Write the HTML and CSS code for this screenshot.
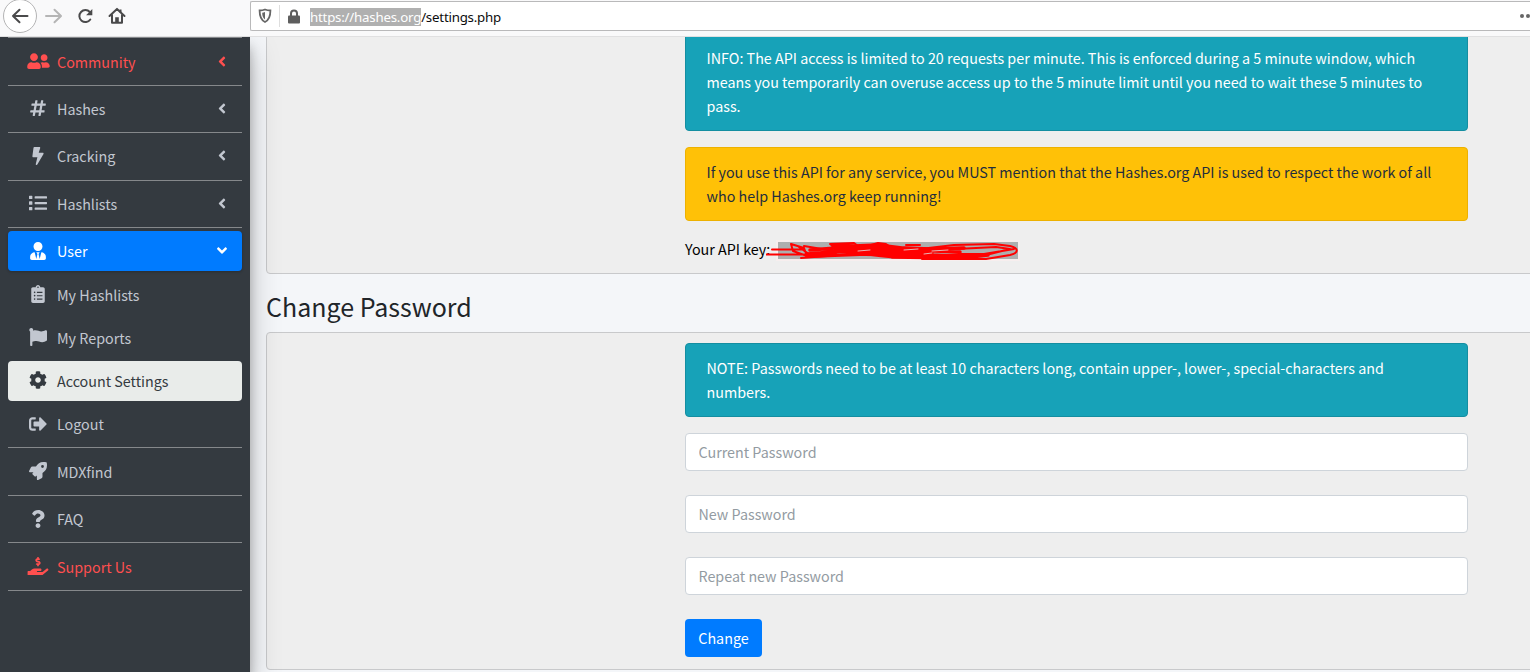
FILE: index.html
```html
<!DOCTYPE html>
<html lang="en">
<head>
<meta charset="utf-8">
<title>Account Settings</title>
<link rel="stylesheet" href="styles.css">
</head>
<body>
<svg class="defs" width="0" height="0"><symbol id="angle" viewBox="0 0 256 512"><path d="M31.700 239l136-136c9.400-9.400 24.600-9.400 33.900 0l22.600 22.600c9.400 9.400 9.400 24.600 0 33.900L127.900 256l96.400 96.400c9.400 9.400 9.400 24.600 0 33.900L201.700 409c-9.400 9.400-24.600 9.400-33.900 0l-136-136c-9.500-9.400-9.500-24.600-.1-34z"/></symbol></svg>
<header class="toolbar">
  <div class="nav-buttons">
    <span class="back"><svg width="18" height="16" viewBox="0 0 18 16"><path d="M16.500 8H2M8.500 1.800L2 8l6.500 6.200"/></svg></span>
    <svg class="forward" width="18" height="16" viewBox="0 0 18 16"><path d="M1 8h14.500M9.500 1.800L16 8l-6.500 6.200"/></svg>
    <svg class="reload" width="18" height="18" viewBox="0 0 18 18"><path d="M14.300 12.500A6 6 0 1 1 13.800 5"/><path class="solid" d="M16.300 2v6.200h-6.200z"/></svg>
    <svg class="home" width="18" height="18" viewBox="0 0 18 18"><path d="M1.500 9L9 1.900 16.500 9M4 8v7.800h10V8"/><path class="solid" d="M7.200 10.200h3.600V16H7.200zM11.500 2.500h2v3h-2z"/></svg>
  </div>
  <div class="address">
    <svg class="shield" width="14" height="16" viewBox="0 0 14 16"><path d="M7 1.500c2 .8 3.500 1 5.400 1 0 5-.5 9.200-5.400 11.500C2.100 11.700 1.600 7.500 1.600 2.500c1.900 0 3.400-.2 5.400-1z"/><path class="solid" d="M7 4v7.500C5 10 4.200 8 4.200 4.700 5.200 4.600 6 4.400 7 4z"/></svg>
    <span class="divider"></span>
    <svg class="lock" width="12" height="15" viewBox="0 0 12 15"><path d="M3 7V4.500a3 3 0 0 1 6 0V7"/><rect x="0" y="6.500" width="12" height="8" rx="1"/></svg>
    <span class="url"><mark>https://hashes.org</mark>/settings.php</span>
    <span class="dots"><i></i><i></i></span>
  </div>
</header>
<div class="page">
  <nav class="sidebar">
    <hr>
    <a class="item red"><svg class="icon wide" viewBox="0 0 640 512"><path d="M192 256c61.900 0 112-50.100 112-112S253.900 32 192 32 80 82.100 80 144s50.100 112 112 112zm76.800 32h-8.300c-20.800 10-43.900 16-68.500 16s-47.600-6-68.500-16h-8.300C51.600 288 0 339.600 0 403.200V432c0 26.500 21.500 48 48 48h288c26.500 0 48-21.500 48-48v-28.800c0-63.600-51.600-115.200-115.200-115.200zM480 256c53 0 96-43 96-96s-43-96-96-96-96 43-96 96 43 96 96 96zm48 32h-3.800c-13.900 4.800-28.600 8-44.200 8s-30.300-3.200-44.200-8H432c-20.400 0-39.200 5.900-55.700 15.400 24.400 26.300 39.700 61.200 39.700 99.800v38.400c0 2.200-.5 4.300-.6 6.400H592c26.500 0 48-21.500 48-48 0-61.900-50.100-112-112-112z"/></svg><span>Community</span><svg class="angle"><use href="#angle"/></svg></a>
    <hr>
    <a class="item"><svg class="icon" viewBox="0 0 448 512"><path d="M440.667 182.109l7.143-40c1.313-7.355-4.342-14.109-11.813-14.109h-74.810l14.623-81.891C377.123 38.754 371.468 32 363.997 32h-40.632a12 12 0 0 0-11.813 9.891L296.175 128H197.540l14.623-81.891C213.477 38.754 207.822 32 200.350 32h-40.632a12 12 0 0 0-11.813 9.891L132.528 128H53.432a12 12 0 0 0-11.813 9.891l-7.143 40C33.163 185.246 38.818 192 46.289 192h74.810L98.242 320H19.146a12 12 0 0 0-11.813 9.891l-7.143 40C-1.123 377.246 4.532 384 12.003 384h74.810L72.190 465.891C70.877 473.246 76.532 480 84.003 480h40.632a12 12 0 0 0 11.813-9.891L151.826 384h98.634l-14.623 81.891C234.523 473.246 240.178 480 247.650 480h40.632a12 12 0 0 0 11.813-9.891L315.472 384h79.096a12 12 0 0 0 11.813-9.891l7.143-40c1.313-7.355-4.342-14.109-11.813-14.109h-74.810l22.857-128h79.096a12 12 0 0 0 11.813-9.891zM261.889 320h-98.634l22.857-128h98.634l-22.857 128z"/></svg><span>Hashes</span><svg class="angle"><use href="#angle"/></svg></a>
    <hr>
    <a class="item"><svg class="icon" viewBox="0 0 320 512"><path d="M296 160H180.600l42.600-129.800C227.200 15 215.700 0 200 0H56C44 0 33.800 8.900 32.200 20.800l-32 240C-1.700 275.200 9.500 288 24 288h118.700L96.600 482.500c-3.600 15.200 8 29.500 23.300 29.500 8.400 0 16.400-4.400 20.800-12l176-304c9.300-15.900-2.200-36-20.700-36z"/></svg><span>Cracking</span><svg class="angle"><use href="#angle"/></svg></a>
    <hr>
    <a class="item"><svg class="icon" viewBox="0 0 512 512"><path d="M80 368H16a16 16 0 0 0-16 16v64a16 16 0 0 0 16 16h64a16 16 0 0 0 16-16v-64a16 16 0 0 0-16-16zm0-320H16A16 16 0 0 0 0 64v64a16 16 0 0 0 16 16h64a16 16 0 0 0 16-16V64a16 16 0 0 0-16-16zm0 160H16a16 16 0 0 0-16 16v64a16 16 0 0 0 16 16h64a16 16 0 0 0 16-16v-64a16 16 0 0 0-16-16zm416 176H176a16 16 0 0 0-16 16v32a16 16 0 0 0 16 16h320a16 16 0 0 0 16-16v-32a16 16 0 0 0-16-16zm0-320H176a16 16 0 0 0-16 16v32a16 16 0 0 0 16 16h320a16 16 0 0 0 16-16V80a16 16 0 0 0-16-16zm0 160H176a16 16 0 0 0-16 16v32a16 16 0 0 0 16 16h320a16 16 0 0 0 16-16v-32a16 16 0 0 0-16-16z"/></svg><span>Hashlists</span><svg class="angle"><use href="#angle"/></svg></a>
    <hr>
    <a class="item open"><svg class="icon" viewBox="0 0 448 512"><path d="M224 256c70.700 0 128-57.300 128-128S294.700 0 224 0 96 57.300 96 128s57.300 128 128 128zm95.800 32.600L272 480l-32-136 32-56h-96l32 56-32 136-47.800-191.400C56.900 292 0 350.300 0 422.400V464c0 26.500 21.500 48 48 48h352c26.500 0 48-21.500 48-48v-41.600c0-72.100-56.900-130.400-128.200-133.800z"/></svg><span>User</span><svg class="angle"><use href="#angle"/></svg></a>
    <a class="item"><svg class="icon" viewBox="0 0 384 512"><path d="M336 64h-80c0-35.300-28.700-64-64-64s-64 28.700-64 64H48C21.500 64 0 85.500 0 112v352c0 26.500 21.500 48 48 48h288c26.500 0 48-21.500 48-48V112c0-26.500-21.500-48-48-48zM96 424c-13.300 0-24-10.700-24-24s10.700-24 24-24 24 10.700 24 24-10.700 24-24 24zm0-96c-13.300 0-24-10.700-24-24s10.700-24 24-24 24 10.700 24 24-10.700 24-24 24zm0-96c-13.300 0-24-10.700-24-24s10.700-24 24-24 24 10.700 24 24-10.700 24-24 24zm96-192c13.300 0 24 10.700 24 24s-10.700 24-24 24-24-10.700-24-24 10.700-24 24-24zm128 368c0 4.400-3.600 8-8 8H168c-4.400 0-8-3.600-8-8v-16c0-4.400 3.600-8 8-8h144c4.400 0 8 3.600 8 8zm0-96c0 4.400-3.600 8-8 8H168c-4.400 0-8-3.600-8-8v-16c0-4.400 3.600-8 8-8h144c4.400 0 8 3.600 8 8zm0-96c0 4.400-3.600 8-8 8H168c-4.400 0-8-3.600-8-8v-16c0-4.400 3.600-8 8-8h144c4.400 0 8 3.600 8 8z"/></svg><span>My Hashlists</span></a>
    <a class="item"><svg class="icon" viewBox="0 0 512 512"><path d="M349.565 98.783C295.978 98.783 251.721 64 184.348 64c-24.955 0-47.309 4.384-68.045 12.013a55.947 55.947 0 0 0 3.586-23.562C118.117 24.015 94.806 1.206 66.338.048 34.345-1.254 8 24.296 8 56c0 19.026 9.497 35.825 24 45.945V488c0 13.255 10.745 24 24 24h16c13.255 0 24-10.745 24-24v-94.400c28.311-12.064 63.582-22.122 114.435-22.122 53.588 0 97.844 34.783 165.217 34.783 48.169 0 86.667-16.294 122.505-40.858C506.840 359.452 512 349.571 512 339.045v-243.100c0-23.393-24.269-38.870-45.485-29.016-34.338 15.948-76.454 31.854-116.950 31.854z"/></svg><span>My Reports</span></a>
    <a class="item active"><svg class="icon" viewBox="0 0 512 512"><path d="M487.400 315.700l-42.600-24.600c4.300-23.200 4.300-47 0-70.200l42.600-24.600c4.900-2.800 7.100-8.600 5.500-14-11.100-35.600-30-67.800-54.700-94.600-3.800-4.100-10-5.100-14.800-2.300L380.800 110c-17.900-15.400-38.500-27.300-60.800-35.100V25.800c0-5.600-3.900-10.500-9.400-11.700-36.700-8.200-74.300-7.800-109.200 0-5.500 1.200-9.400 6.100-9.400 11.700V75c-22.200 7.900-42.800 19.800-60.800 35.100L88.700 85.500c-4.900-2.800-11-1.900-14.800 2.300-24.700 26.700-43.600 58.900-54.700 94.600-1.700 5.400.6 11.200 5.500 14L67.300 221c-4.300 23.200-4.300 47 0 70.200l-42.600 24.600c-4.900 2.800-7.100 8.600-5.500 14 11.100 35.600 30 67.800 54.700 94.600 3.800 4.100 10 5.100 14.800 2.300l42.600-24.600c17.900 15.400 38.500 27.300 60.800 35.100v49.200c0 5.600 3.900 10.500 9.400 11.700 36.700 8.200 74.300 7.800 109.200 0 5.500-1.200 9.400-6.100 9.400-11.700v-49.200c22.200-7.900 42.800-19.800 60.800-35.100l42.600 24.600c4.900 2.800 11 1.900 14.800-2.300 24.700-26.700 43.600-58.900 54.700-94.600 1.500-5.500-.7-11.300-5.600-14.100zM256 336c-44.100 0-80-35.900-80-80s35.900-80 80-80 80 35.900 80 80-35.900 80-80 80z"/></svg><span>Account Settings</span></a>
    <a class="item"><svg class="icon" viewBox="0 0 512 512"><path d="M497 273L329 441c-15 15-41 4.500-41-17v-96H152c-13.300 0-24-10.700-24-24v-96c0-13.300 10.700-24 24-24h136V88c0-21.400 25.900-32 41-17l168 168c9.300 9.400 9.300 24.600 0 34zM192 436v-40c0-6.600-5.400-12-12-12H96c-17.700 0-32-14.300-32-32V160c0-17.700 14.300-32 32-32h84c6.600 0 12-5.400 12-12V76c0-6.600-5.400-12-12-12H96c-53 0-96 43-96 96v192c0 53 43 96 96 96h84c6.600 0 12-5.400 12-12z"/></svg><span>Logout</span></a>
    <hr>
    <a class="item"><svg class="icon" viewBox="0 0 512 512"><path d="M505.120 19.094c-1.189-5.531-6.658-11-12.207-12.188C460.716 0 435.507 0 410.407 0 307.175 0 245.270 55.203 199.052 128H94.838c-16.348.016-35.557 11.875-42.887 26.484L2.516 253.297A28.400 28.400 0 0 0 0 264a24.008 24.008 0 0 0 24.006 24h103.840l-22.475 22.469c-11.365 11.361-12.996 32.258 0 45.250l50.904 50.906c11.156 11.188 32.220 13.156 45.277 0L224 384.156V488a24.008 24.008 0 0 0 24 24 28.600 28.600 0 0 0 10.707-2.516l98.728-49.390c14.629-7.297 26.508-26.500 26.508-42.860V312.797c72.590-46.313 128.030-108.406 128.030-211.094.078-25.203.078-50.406-6.853-82.609zM384.040 168a40 40 0 1 1 40-40 40.023 40.023 0 0 1-40 40z"/></svg><span>MDXfind</span></a>
    <hr>
    <a class="item"><svg class="icon" viewBox="0 0 384 512"><path d="M202.021 0C122.202 0 70.503 32.703 29.914 91.026c-7.363 10.580-5.093 25.086 5.178 32.874l43.138 32.709c10.373 7.865 25.132 6.026 33.253-4.148 25.049-31.381 43.630-49.449 82.757-49.449 30.764 0 68.816 19.799 68.816 49.631 0 22.552-18.617 34.134-48.993 51.164-35.423 19.860-82.299 44.576-82.299 106.405V320c0 13.255 10.745 24 24 24h72.471c13.255 0 24-10.745 24-24v-5.773c0-42.860 125.268-44.645 125.268-160.627C377.504 66.256 286.902 0 202.021 0zM192 373.459c-38.196 0-69.271 31.075-69.271 69.271 0 38.195 31.075 69.270 69.271 69.270s69.271-31.075 69.271-69.271-31.075-69.270-69.271-69.270z"/></svg><span>FAQ</span></a>
    <hr>
    <a class="item red"><svg class="icon hand" viewBox="0 0 576 512"><path d="M257.600 144.300l50 14.300c3.600 1 6.100 4.400 6.100 8.100 0 4.600-3.800 8.400-8.400 8.400h-32.800c-3.600 0-7.100-.8-10.300-2.200-4.800-2.200-10.400-1.700-14.100 2l-17.500 17.500c-5.300 5.300-4.700 14.300 1.500 18.400 9.500 6.300 20.300 10.100 31.800 11.500V240c0 8.800 7.200 16 16 16h16c8.800 0 16-7.200 16-16v-17.600c30.300-3.600 53.300-31 49.300-63-2.900-23-20.700-41.300-42.900-47.700l-50-14.300c-3.600-1-6.100-4.400-6.100-8.100 0-4.600 3.800-8.400 8.400-8.400h32.800c3.600 0 7.100.8 10.300 2.200 4.800 2.200 10.400 1.700 14.100-2l17.500-17.500c5.300-5.300 4.700-14.300-1.500-18.400-9.500-6.300-20.300-10.100-31.800-11.500V16c0-8.800-7.200-16-16-16h-16c-8.800 0-16 7.200-16 16v17.600c-30.300 3.600-53.300 31-49.300 63 2.900 23 20.600 41.300 42.900 47.700z"/><path d="M565.300 328.100c-11.800-10.700-30.200-10-42.600 0L430.300 402c-11.300 9.100-25.400 14-40 14H272c-8.800 0-16-7.200-16-16s7.200-16 16-16h78.300c15.900 0 30.700-10.900 33.300-26.600 3.300-20-12.100-37.400-31.600-37.400H192c-27 0-53.100 9.300-74.100 26.300L71.400 384H16c-8.800 0-16 7.200-16 16v96c0 8.800 7.200 16 16 16h356.800c14.500 0 28.600-4.900 40-14L564 377c15.200-12.100 16.400-35.300 1.300-48.900z"/></svg><span>Support Us</span></a>
    <hr>
  </nav>
  <main class="content">
    <section class="card api">
      <div class="alert info">INFO: The API access is limited to 20 requests per minute. This is enforced during a 5 minute window, which<br>means you temporarily can overuse access up to the 5 minute limit until you need to wait these 5 minutes to<br>pass.</div>
      <div class="alert warning">If you use this API for any service, you MUST mention that the Hashes.org API is used to respect the work of all<br>who help Hashes.org keep running!</div>
      <div class="key">Your API key: <span class="secret"><svg class="scribble" width="256" height="22" viewBox="0 0 256 22"><path d="M6 8.500h32M0 13.500h40M25 3l2 7 14 5-3-8-13-4M33 6l14 10-12 1 26-2M38 5l30 5-28 5 30-2"/><path class="thick" d="M44 9l26-2 44-1 50 2 34-1M42 13l34-3 60 1 30 2M50 15l50-2 30 3 36-1 48-1M66 4l22 1 24-1 24 3M116 9l30 4 60 3M126 16l70 1 26-3M84 9l60 0 50 2M84 13l60 1"/><path d="M64 3l24-1 4 3M98 6l14-4 8 1 6 4M140 4l14 0M154 8l34-4 40-1 16 2c9 2 9 7 0 9l-24 4-64 0M190 8l40-2 14 2-20 5-30 0M206 15l42-7"/><path class="gap" d="M92 10l12-1M138 9l14-1M166 10l16-1M158 13l8-1"/></svg></span></div>
    </section>
    <h2>Change Password</h2>
    <section class="card">
      <div class="alert info">NOTE: Passwords need to be at least 10 characters long, contain upper-, lower-, special-characters and<br>numbers.</div>
      <input type="password" placeholder="Current Password">
      <input type="password" placeholder="New Password">
      <input type="password" placeholder="Repeat new Password">
      <button>Change</button>
    </section>
  </main>
</div>
</body>
</html>
```
FILE: styles.css
```css
* { box-sizing: border-box; }
body {
  margin: 0;
  width: 1530px;
  height: 672px;
  overflow: hidden;
  display: flex;
  flex-direction: column;
  background: #f4f6f9;
  color: #212529;
  font: 14.32px/24px "Noto Sans CJK SC", "Noto Sans", sans-serif;
}
svg { display: block; flex: none; }

/* Browser toolbar */
.toolbar {
  display: flex;
  flex: none;
  height: 37px;
  background: #f9f9fa;
  border-bottom: 1px solid #e0e0e1;
  position: relative;
  z-index: 2;
}
.nav-buttons { width: 250px; height: 32px; display: flex; align-items: center; }
.nav-buttons svg { fill: none; stroke: #4a4a4b; stroke-width: 2; stroke-linecap: round; stroke-linejoin: round; }
.nav-buttons .solid { fill: #4a4a4b; stroke: none; }
.back {
  width: 34px; height: 34px; margin-left: 3px;
  border: 1px solid #b4b4b5; border-radius: 50%; background: #fff;
  display: flex; align-items: center; justify-content: center;
}
.nav-buttons .forward { margin-left: 8px; stroke: #b5b5b5; }
.reload { margin-left: 13px; }
.home { margin-left: 14px; }
.address {
  flex: 1; height: 30px; margin-top: 1px;
  display: flex; align-items: center;
  background: #fff; border: 1px solid #b9b9ba; border-right: 0; border-radius: 2px 0 0 2px;
  padding-left: 7px;
}
.shield { fill: none; stroke: #666; stroke-width: 1.8; }
.shield .solid { fill: #666; stroke: none; }
.divider { width: 1px; height: 22px; background: #dedede; margin: 0 8px 0 7px; }
.lock { fill: #5e5e5e; }
.lock path { fill: none; stroke: #5e5e5e; stroke-width: 2; }
.url { margin: 2px 0 0 10px; font: 13.3px/18px "Noto Sans", sans-serif; color: #0c0c0d; white-space: nowrap; letter-spacing: -.22px; }
.url mark { background: #b0b0b0; color: #fff; display: inline-block; }
.dots { margin-left: auto; display: flex; gap: 2px; }
.dots i { width: 4px; height: 4px; border-radius: 50%; background: #666; }

/* Page body */
.page { display: flex; flex: 1; min-height: 0; }
.sidebar {
  flex: none; width: 250px; padding: .4px 8px 0;
  background: #343a40; color: #c2c7d0;
  position: relative; z-index: 1;
  box-shadow: 0 14px 28px rgba(0,0,0,.25), 0 10px 10px rgba(0,0,0,.22);
}
.sidebar hr { height: 1px; border: 0; margin: 0 0 3.22px; background: #85888b; }
.item {
  display: flex; align-items: center;
  height: 40px; margin-bottom: 3.22px; padding: 0 16px;
  border-radius: 4px;
}
.item span { flex: 1; }
.icon { width: 28px; height: 18px; margin-right: 5px; fill: currentColor; position: relative; top: -.6px; }
.wide { width: 23px; margin: 0 7px 0 3px; }
.hand { height: 18.500px; }
.angle { width: 8px; height: 17px; fill: currentColor; position: relative; top: -.6px; }
.red { color: #ff4f4f; }
.open { background: #007bff; color: #fff; box-shadow: 0 1px 3px rgba(0,0,0,.24); }
.open .angle { transform: rotate(-90deg); }
.active { background: #e9ecea; color: #343a40; }

.content { flex: 1; min-width: 0; padding-left: 16px; }
.card {
  width: 1280px; padding: 10px 0 12px 418px;
  background: #eee; border: 1px solid #c8c9cb; border-radius: 4px;
}
.api { height: 245px; margin-top: -8px; padding-top: 3px; }
.alert {
  width: 783px; margin-bottom: 16px; padding: 12px 20.500px;
  border: 1px solid; border-radius: 4px; white-space: nowrap;
}
.info { background: #17a2b8; border-color: #148ea1; color: #fff; }
.warning { background: #ffc107; border-color: #edb100; color: #1f2d3d; }
.key { color: #000; display: flex; align-items: center; }
.secret { position: relative; width: 240px; height: 17px; margin: 2px 0 0 8px; background: #aeaeae; box-shadow: 0 0 0 2px #f7eeee; }
.scribble { position: absolute; left: -12px; top: -1px; fill: none; stroke: #f00; stroke-width: 2; stroke-linejoin: round; stroke-linecap: round; }
.scribble .thick { stroke-width: 3.500; }
.scribble .gap { stroke: #e9b4b4; stroke-width: 1; }
h2 { margin: 16px 0 10px; font-weight: 400; font-size: 25px; line-height: 32px; }
input {
  display: block; width: 783px; height: 38px; margin: 0 0 24px; padding: 0 12.500px 2px;
  font: inherit; background: #fff; border: 1px solid #ced4da; border-radius: 4px;
}
input::placeholder { color: #939ba2; opacity: 1; }
button {
  display: block; height: 38px; width: 77px; padding: 0;
  font: inherit; color: #fff; background: #007bff; border: 0; border-radius: 4px;
}
.defs { position: absolute; }
```
